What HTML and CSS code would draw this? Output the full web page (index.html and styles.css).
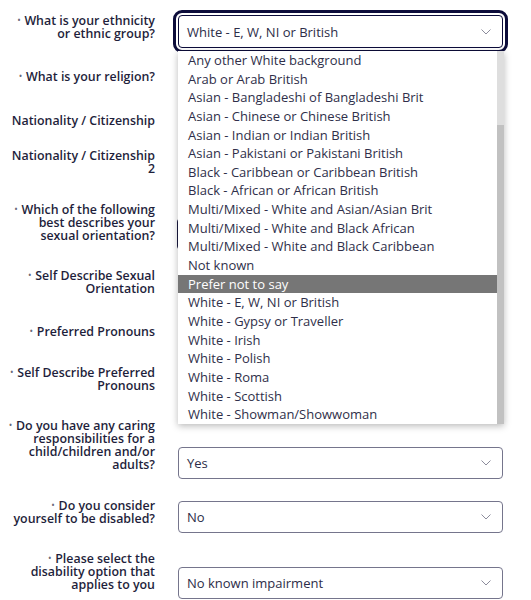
FILE: index.html
```html
<!DOCTYPE html>
<html lang="en">
<head>
<meta charset="utf-8">
<title>Equality form</title>
<link rel="stylesheet" href="styles.css">
</head>
<body>
<form class="form">
  <div class="row">
    <label class="label"><span class="req"></span>What is your ethnicity or ethnic group?</label>
    <div class="select is-focused">
      <span class="value">White - E, W, NI or British</span>
      <svg class="chev" width="10" height="6" viewBox="0 0 10 6"><polyline points="0.5,0.5 5,5 9.5,0.5" fill="none" stroke="#8c8c9c" stroke-width="1"/></svg>
      <div class="listbox">
        <ul class="options">
          <li>Any other White background</li>
          <li>Arab or Arab British</li>
          <li>Asian - Bangladeshi of Bangladeshi Brit</li>
          <li>Asian - Chinese or Chinese British</li>
          <li>Asian - Indian or Indian British</li>
          <li>Asian - Pakistani or Pakistani British</li>
          <li>Black - Caribbean or Caribbean British</li>
          <li>Black - African or African British</li>
          <li>Multi/Mixed - White and Asian/Asian Brit</li>
          <li>Multi/Mixed - White and Black African</li>
          <li>Multi/Mixed - White and Black Caribbean</li>
          <li>Not known</li>
          <li class="active">Prefer not to say</li>
          <li>White - E, W, NI or British</li>
          <li>White - Gypsy or Traveller</li>
          <li>White - Irish</li>
          <li>White - Polish</li>
          <li>White - Roma</li>
          <li>White - Scottish</li>
          <li>White - Showman/Showwoman</li>
        </ul>
        <div class="scrollbar"><div class="thumb"></div></div>
      </div>
    </div>
  </div>
  <div class="row">
    <label class="label"><span class="req"></span>What is your religion?</label>
    <div class="select"></div>
  </div>
  <div class="row">
    <label class="label label--optional">Nationality / Citizenship</label>
    <div class="select"></div>
  </div>
  <div class="row">
    <label class="label label--optional">Nationality / Citizenship 2</label>
    <div class="select"></div>
  </div>
  <div class="row">
    <label class="label"><span class="req"></span>Which of the following best describes your sexual orientation?</label>
    <div class="select is-hover"></div>
  </div>
  <div class="row">
    <label class="label"><span class="req"></span>Self Describe Sexual Orientation</label>
    <div class="select"></div>
  </div>
  <div class="row">
    <label class="label"><span class="req"></span>Preferred Pronouns</label>
    <div class="select"></div>
  </div>
  <div class="row">
    <label class="label"><span class="req"></span>Self Describe Preferred Pronouns</label>
    <div class="select"></div>
  </div>
  <div class="row">
    <label class="label"><span class="req"></span>Do you have any caring responsibilities for a child/children and/or adults?</label>
    <div class="select">
      <span class="value">Yes</span>
      <svg class="chev" width="10" height="6" viewBox="0 0 10 6"><polyline points="0.5,0.5 5,5 9.5,0.5" fill="none" stroke="#8c8c9c" stroke-width="1"/></svg>
    </div>
  </div>
  <div class="row">
    <label class="label"><span class="req"></span>Do you consider yourself to be disabled?</label>
    <div class="select">
      <span class="value">No</span>
      <svg class="chev" width="10" height="6" viewBox="0 0 10 6"><polyline points="0.5,0.5 5,5 9.5,0.5" fill="none" stroke="#8c8c9c" stroke-width="1"/></svg>
    </div>
  </div>
  <div class="row">
    <label class="label"><span class="req"></span>Please select the disability option that applies to you</label>
    <div class="select">
      <span class="value">No known impairment</span>
      <svg class="chev" width="10" height="6" viewBox="0 0 10 6"><polyline points="0.5,0.5 5,5 9.5,0.5" fill="none" stroke="#8c8c9c" stroke-width="1"/></svg>
    </div>
  </div>
</form>
</body>
</html>
```
FILE: styles.css
```css
html, body {
  margin: 0;
  padding: 0;
  background: #ffffff;
}

body {
  font-family: "Open Sans", "Noto Sans", sans-serif;
  color: #24243f;
}

.form {
  padding-top: 6px;
}

.row {
  display: grid;
  grid-template-columns: 155px 325px;
  column-gap: 23px;
  align-items: end;
  margin-bottom: 11.4px;
}

.label {
  padding: 8px 0 8px 5px;
  text-align: right;
  font-size: 12.4px;
  line-height: 13px;
  font-weight: 600;
  color: #1f1f3c;
}

.label--optional {
  padding-top: 3px;
}

.req::before {
  content: "\2022";
  font-size: 8px;
  line-height: 0;
  color: #6a6a7a;
  position: relative;
  top: -2px;
  margin-right: 4px;
}

.select {
  position: relative;
  box-sizing: border-box;
  height: 32px;
  border: 1px solid #75758c;
  border-radius: 4px;
  display: flex;
  align-items: center;
  justify-content: space-between;
  padding: 0 11px 0 8px;
  background: #ffffff;
}

.value {
  font-size: 13px;
  color: #2d2d48;
  white-space: nowrap;
}

.chev {
  display: block;
  flex: none;
}

.select.is-focused {
  height: 33px;
  border-color: #0c0c3a;
  outline: 3px solid #0c0c3a;
  outline-offset: 2px;
}

.select.is-hover {
  border-color: #1a1a40;
  outline: 1px solid #1a1a40;
}

.listbox {
  position: absolute;
  z-index: 10;
  top: calc(100% + 4px);
  left: -1px;
  width: 326px;
  height: 373px;
  display: flex;
  background: #ffffff;
  box-shadow: 0 2px 7px rgba(0, 0, 0, 0.28);
}

.options {
  list-style: none;
  margin: 0;
  padding: 0;
  flex: 1;
  overflow: hidden;
}

.options li {
  height: 18.65px;
  line-height: 18.65px;
  padding-left: 10px;
  font-size: 13px;
  color: #2f2f4a;
  white-space: nowrap;
}

.options li.active {
  background: #767676;
  color: #ffffff;
}

.scrollbar {
  width: 7px;
  display: flex;
  flex-direction: column;
  background: #dedede;
}

.thumb {
  margin-top: 74px;
  flex: 1;
  background: #c1c1c1;
}
```
